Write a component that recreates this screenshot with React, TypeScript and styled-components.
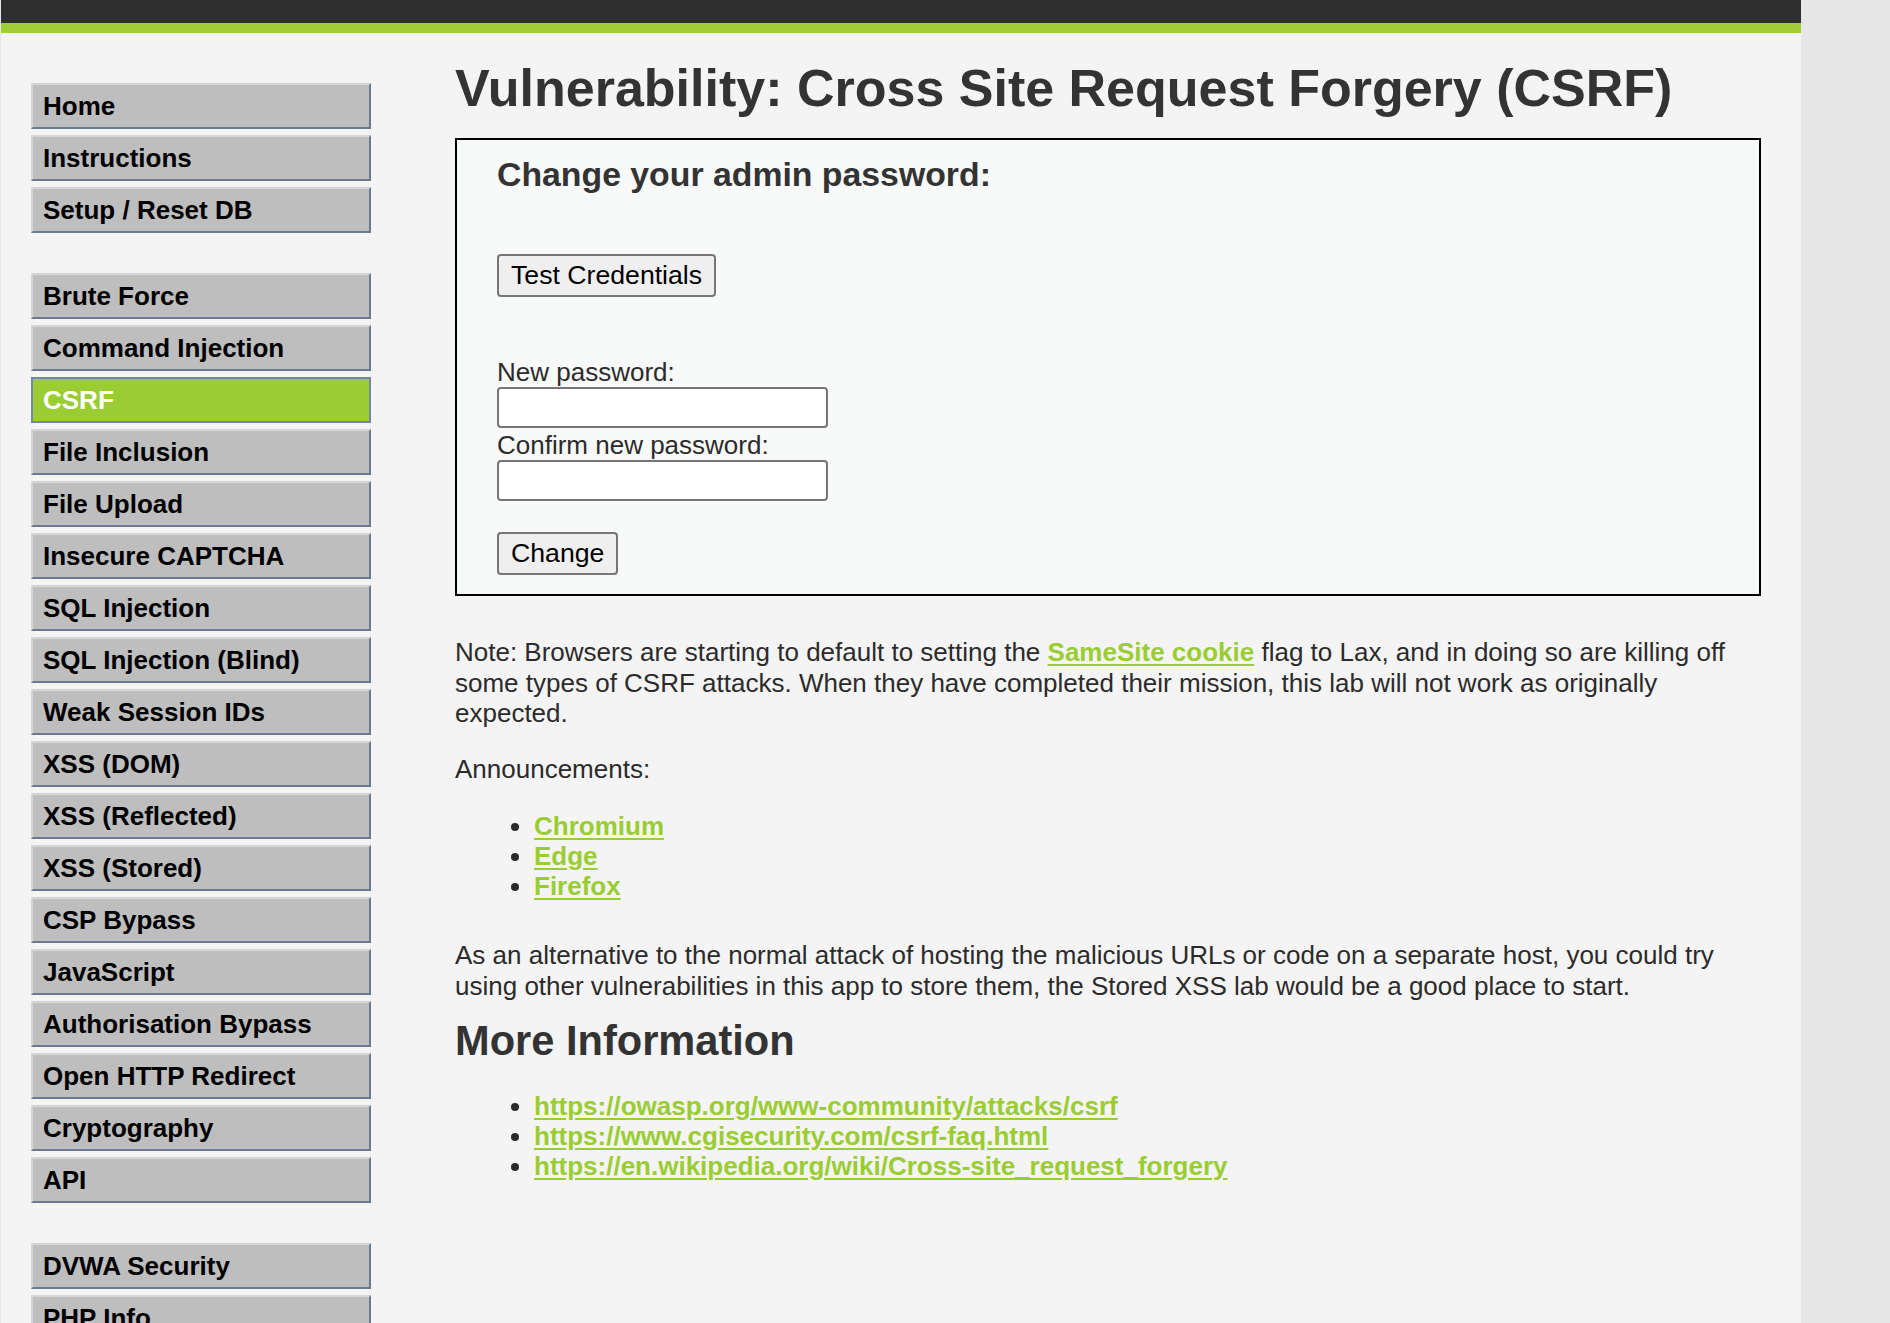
import React from "react";
import styled, { createGlobalStyle, css } from "styled-components";

const GlobalStyle = createGlobalStyle`
  html, body {
    margin: 0;
    padding: 0;
    overflow: hidden;
    background: #e7e7e7;
    font-family: "Liberation Sans", Arial, Helvetica, sans-serif;
  }
`;

const Page = styled.div`
  width: 1800px;
  margin-left: 1px;
  min-height: 1323px;
  background: #f4f4f4;
  color: #2b2b2b;
`;

const Header = styled.header`
  height: 23px;
  background: #2f2f2f;
  border-bottom: 10px solid #a3cd36;
`;

const Body = styled.div`
  display: flex;
  align-items: flex-start;
`;

const Sidebar = styled.nav`
  width: 454px;
  flex: none;
  box-sizing: border-box;
  padding: 50px 0 0 30px;
`;

const MenuGroup = styled.ul`
  list-style: none;
  margin: 0 0 40px 0;
  padding: 0;
  display: flex;
  flex-direction: column;
  gap: 6px;
`;

const MenuItem = styled.li<{ $active?: boolean }>`
  width: 340px;
  height: 46px;
  box-sizing: border-box;
  border: 2px solid;
  border-color: #d6d6d6 #6c7a8e #6c7a8e #d6d6d6;
  background: #bebebe;
  color: #000;
  font-weight: bold;
  font-size: 26px;
  line-height: 42px;
  padding-left: 10px;
  white-space: nowrap;
  ${(p) =>
    p.$active &&
    css`
      background: #9acd32;
      border-color: #7586a6;
      color: #fff;
    `}
`;

const Content = styled.main`
  flex: 1;
  min-width: 0;
  padding: 25px 40px 0 0;
`;

const Title = styled.h1`
  margin: 0 0 20px 0;
  font-size: 52px;
  font-weight: bold;
  color: #333;
  line-height: 60px;
  white-space: nowrap;
`;

const CodeArea = styled.section`
  border: 2px solid #000;
  background: #f8f9f9;
  padding: 15px 40px 19px 40px;
`;

const FormTitle = styled.h3`
  margin: 0 0 60px 0;
  font-size: 33.8px;
  line-height: 39px;
  font-weight: bold;
  color: #333;
`;

const Button = styled.button`
  display: block;
  height: 43px;
  box-sizing: border-box;
  padding: 0 12px;
  font-family: "Liberation Sans", Arial, sans-serif;
  font-size: 26.67px;
  color: #000;
  background: #efefef;
  border: 2px solid #767676;
  border-radius: 4px;
`;

const Form = styled.form`
  margin: 60px 0 0 0;
  display: flex;
  flex-direction: column;
  align-items: flex-start;
`;

const Label = styled.label`
  font-size: 26px;
  line-height: 30px;
  color: #2b2b2b;
`;

const Input = styled.input`
  width: 331px;
  height: 41px;
  box-sizing: border-box;
  border: 2px solid #767676;
  border-radius: 4px;
  background: #fff;
  margin: 0 0 2px 0;
`;

const SubmitRow = styled.div`
  margin-top: 29px;
`;

const Para = styled.p<{ $top?: number }>`
  margin: ${(p) => p.$top ?? 26}px 0 0 0;
  font-size: 26px;
  line-height: 30.5px;
  color: #2b2b2b;
`;

const Link = styled.a`
  color: #9acd32;
  font-weight: bold;
  text-decoration: underline;
  text-underline-offset: 3px;
`;

const List = styled.ul<{ $top?: number }>`
  margin: ${(p) => p.$top ?? 26}px 0 0 0;
  padding-left: 79px;
  font-size: 26px;
  line-height: 30px;
  color: #2b2b2b;
  li::marker {
    color: #2b2b2b;
  }
`;

const SubTitle = styled.h2`
  margin: 16px 0 0 0;
  font-size: 41.6px;
  line-height: 48px;
  font-weight: bold;
  color: #333;
`;

const groups: string[][] = [
  ["Home", "Instructions", "Setup / Reset DB"],
  [
    "Brute Force",
    "Command Injection",
    "CSRF",
    "File Inclusion",
    "File Upload",
    "Insecure CAPTCHA",
    "SQL Injection",
    "SQL Injection (Blind)",
    "Weak Session IDs",
    "XSS (DOM)",
    "XSS (Reflected)",
    "XSS (Stored)",
    "CSP Bypass",
    "JavaScript",
    "Authorisation Bypass",
    "Open HTTP Redirect",
    "Cryptography",
    "API",
  ],
  ["DVWA Security", "PHP Info", "About"],
  ["Logout"],
];

export default function App() {
  return (
    <>
      <GlobalStyle />
      <Page>
        <Header />
        <Body>
          <Sidebar>
            {groups.map((g, i) => (
              <MenuGroup key={i}>
                {g.map((item) => (
                  <MenuItem key={item} $active={item === "CSRF"}>
                    {item}
                  </MenuItem>
                ))}
              </MenuGroup>
            ))}
          </Sidebar>
          <Content>
            <Title>Vulnerability: Cross Site Request Forgery (CSRF)</Title>
            <CodeArea>
              <FormTitle>Change your admin password:</FormTitle>
              <Button type="button">Test Credentials</Button>
              <Form onSubmit={(e) => e.preventDefault()}>
                <Label>New password:</Label>
                <Input type="password" />
                <Label>Confirm new password:</Label>
                <Input type="password" />
                <SubmitRow>
                  <Button type="submit">Change</Button>
                </SubmitRow>
              </Form>
            </CodeArea>
            <Para $top={41}>
              Note: Browsers are starting to default to setting the{" "}
              <Link href="#">SameSite cookie</Link> flag to Lax, and in doing so
              are killing off some types of CSRF attacks. When they have
              completed their mission, this lab will not work as originally
              expected.
            </Para>
            <Para $top={25}>Announcements:</Para>
            <List $top={27}>
              <li>
                <Link href="#">Chromium</Link>
              </li>
              <li>
                <Link href="#">Edge</Link>
              </li>
              <li>
                <Link href="#">Firefox</Link>
              </li>
            </List>
            <Para $top={39}>
              As an alternative to the normal attack of hosting the malicious
              URLs or code on a separate host, you could try using other
              vulnerabilities in this app to store them, the Stored XSS lab
              would be a good place to start.
            </Para>
            <SubTitle>More Information</SubTitle>
            <List $top={26}>
              <li>
                <Link href="#">https://owasp.org/www-community/attacks/csrf</Link>
              </li>
              <li>
                <Link href="#">https://www.cgisecurity.com/csrf-faq.html</Link>
              </li>
              <li>
                <Link href="#">
                  https://en.wikipedia.org/wiki/Cross-site_request_forgery
                </Link>
              </li>
            </List>
          </Content>
        </Body>
      </Page>
    </>
  );
}
